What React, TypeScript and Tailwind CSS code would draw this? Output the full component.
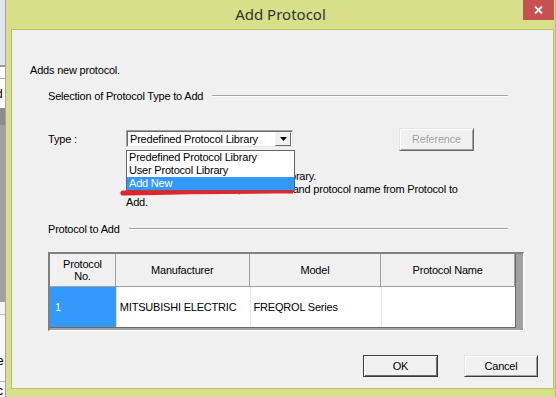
import React from "react";

const columns = [
  { label: ["Protocol", "No."], w: "w-[66px]" },
  { label: ["Manufacturer"], w: "w-[134px]" },
  { label: ["Model"], w: "w-[132px]" },
  { label: ["Protocol Name"], w: "w-[134px]" },
];

const rows = [{ no: "1", maker: "MITSUBISHI ELECTRIC", model: "FREQROL Series", name: "" }];

const options = ["Predefined Protocol Library", "User Protocol Library", "Add New"];

const SectionHeader = ({ title }: { title: string }) => (
  <div className="ml-[18px] flex h-[14px] w-[460px] items-center">
    <span className="whitespace-nowrap leading-[14px]">{title}</span>
    <div className="ml-[9px] flex-1 border-t border-b border-t-[#a0a0a0] border-b-white" />
  </div>
);

const BackStrip = () => (
  <div className="flex h-full w-[5px] shrink-0 flex-col overflow-hidden text-[12px] leading-none">
    <div className="h-[4px] bg-[#dfe6f3]" />
    <div className="h-[61px] bg-[#e3e5ec]" />
    <div className="h-[2px] bg-[#9a9a9a]" />
    <div className="h-[11px] bg-white" />
    <div className="h-px bg-[#b0b0b0]" />
    <div className="flex h-[29px] items-center overflow-hidden bg-white">
      <span className="-ml-[4px]">d</span>
    </div>
    <div className="h-[17px] bg-[#8c8c8c]" />
    <div className="h-[177px] bg-[#a0a0a0]" />
    <div className="h-[13px] border-b border-[#c0c0c0] bg-[#f4f4f4]" />
    <div className="flex h-[66px] items-end overflow-hidden bg-[#f8f8f8] pb-[14px]">
      <span className="-ml-[3px]">e</span>
    </div>
    <div className="h-px bg-[#b0b0b0]" />
    <div className="flex flex-1 items-end overflow-hidden bg-[#f8f8f8]">
      <span className="-ml-[3px]">c</span>
    </div>
  </div>
);

export default function App() {
  return (
    <div className="flex h-[397px] w-[556px] overflow-hidden bg-[#e3e5ec] font-['Liberation_Sans',Arial,sans-serif] text-[11px] tracking-[-0.2px] text-black">
      <BackStrip />
      <div className="flex flex-1 flex-col border-l border-r border-l-[#a3a3a3] border-r-[#b9c070] bg-[#d7df89]">
        {/* title bar */}
        <div className="relative flex h-[29px] shrink-0 items-center justify-center">
          <span className="pb-[1px] font-['Noto_Sans','Open_Sans',sans-serif] text-[15px] tracking-normal text-[#333]">
            Add Protocol
          </span>
          <button className="absolute right-[1px] top-0 flex h-[20px] w-[31px] items-center justify-center bg-[#c75050]">
            <svg width="9" height="8" viewBox="0 0 9 8">
              <path d="M1 0.5 L8 7.5 M8 0.5 L1 7.5" stroke="#fff" strokeWidth="1.8" />
            </svg>
          </button>
        </div>

        {/* client area */}
        <div className="relative mb-[8px] ml-[5px] mr-[1px] flex-1 border border-[#b8c06c] bg-[#f0f0f0]">
          <div className="pl-[18px] pt-[33px]">
            <p className="h-[14px] leading-[14px]">Adds new protocol.</p>

            <div className="mt-[12px]">
              <SectionHeader title="Selection of Protocol Type to Add" />
            </div>

            <div className="ml-[18px] mt-[25px] flex items-start">
              <span className="w-[78px] pt-[4px] leading-[14px]">Type :</span>
              <div className="mt-[2px] flex h-[17px] w-[167px] items-center border border-t-[#a0a0a0] border-l-[#a0a0a0] border-b-[#e3e3e3] border-r-[#e3e3e3] bg-white shadow-[inset_1px_1px_0_#696969]">
                <span className="flex-1 whitespace-nowrap pl-[3px] pt-[1px]">Predefined Protocol Library</span>
                <div className="mr-[1px] flex h-[14px] w-[16px] items-center justify-center border border-t-[#f4f4f4] border-l-[#f4f4f4] border-b-[#696969] border-r-[#696969] bg-[#f0f0f0]">
                  <svg width="7" height="4" viewBox="0 0 7 4">
                    <path d="M0 0 H7 L3.5 4 Z" fill="#000" />
                  </svg>
                </div>
              </div>
              <button className="ml-[106px] h-[23px] w-[75px] border border-t-[#e3e3e3] border-l-[#e3e3e3] border-b-[#696969] border-r-[#696969] bg-[#f0f0f0] text-[#a0a0a0] shadow-[inset_1px_1px_0_#fff,inset_-1px_-1px_0_#a0a0a0] [text-shadow:1px_1px_0_#fff]">
                Reference
              </button>
            </div>

            <div className="ml-[96px] mt-[19px] leading-[13px]">
              <p className="whitespace-nowrap">Select a protocol from a Protocol Library.</p>
              <p className="whitespace-nowrap">Select the manufacturer, the model and protocol name from Protocol to</p>
              <p>Add.</p>
            </div>

            <div className="mt-[13px]">
              <SectionHeader title="Protocol to Add" />
            </div>

            <div className="ml-[18px] mt-[16px] flex w-[476px] border-t-2 border-l-2 border-r border-b border-t-[#808080] border-l-[#808080] border-r-white border-b-white bg-[#a0a0a0] pb-[2px] pr-[6px]">
              <div className="w-[466px] border-r border-b border-[#696969]">
                <div className="flex h-[33px] border-b border-[#a0a0a0] bg-[#f0f0f0]">
                  {columns.map((c, i) => (
                    <div
                      key={i}
                      className={`${c.w} flex flex-col items-center justify-center border-r border-[#a0a0a0] text-center leading-[12px]`}
                    >
                      {c.label.map((l) => (
                        <span key={l}>{l}</span>
                      ))}
                    </div>
                  ))}
                </div>
                {rows.map((r) => (
                  <div key={r.no} className="flex h-[40px] bg-white">
                    <div className="flex w-[66px] items-center bg-[#3399ff] pl-[5px] text-white">{r.no}</div>
                    <div className="flex w-[134px] items-center border-l border-[#e3e3e3] pl-[3px]">{r.maker}</div>
                    <div className="flex w-[132px] items-center border-l border-[#e3e3e3] pl-[3px]">{r.model}</div>
                    <div className="flex w-[134px] items-center border-l border-[#e3e3e3] pl-[3px]">{r.name}</div>
                  </div>
                ))}
              </div>
            </div>

            <div className="ml-[333px] mt-[24px] flex gap-[26px]">
              <button className="h-[22px] w-[75px] border border-[#3c3c3c] bg-[#f0f0f0] shadow-[inset_1px_1px_0_#fff,inset_-1px_-1px_0_#696969]">
                OK
              </button>
              <button className="h-[22px] w-[74px] border border-t-[#e3e3e3] border-l-[#e3e3e3] border-b-[#3c3c3c] border-r-[#3c3c3c] bg-[#f0f0f0] shadow-[inset_1px_1px_0_#fff,inset_-1px_-1px_0_#a0a0a0]">
                Cancel
              </button>
            </div>
          </div>

          {/* open dropdown list */}
          <div className="absolute left-[114px] top-[120px] w-[169px] border border-[#646464] bg-white leading-[13px]">
            {options.map((o, i) => (
              <div
                key={o}
                className={`h-[13px] whitespace-nowrap pl-[2px] ${i === 2 ? "bg-[#3399ff] text-white" : ""}`}
              >
                {o}
              </div>
            ))}
          </div>

          {/* red marker stroke */}
          <svg className="absolute left-[108px] top-[158px]" width="176" height="10" viewBox="0 0 176 10">
            <path
              d="M3 2.5 C 60 2.6, 120 2.2, 173 2.6 L 173 5.6 C 120 5.6, 60 6, 3 7.6 A 2.5 2.5 0 0 1 3 2.5 Z"
              fill="#e2242c"
            />
          </svg>
        </div>
      </div>
    </div>
  );
}
